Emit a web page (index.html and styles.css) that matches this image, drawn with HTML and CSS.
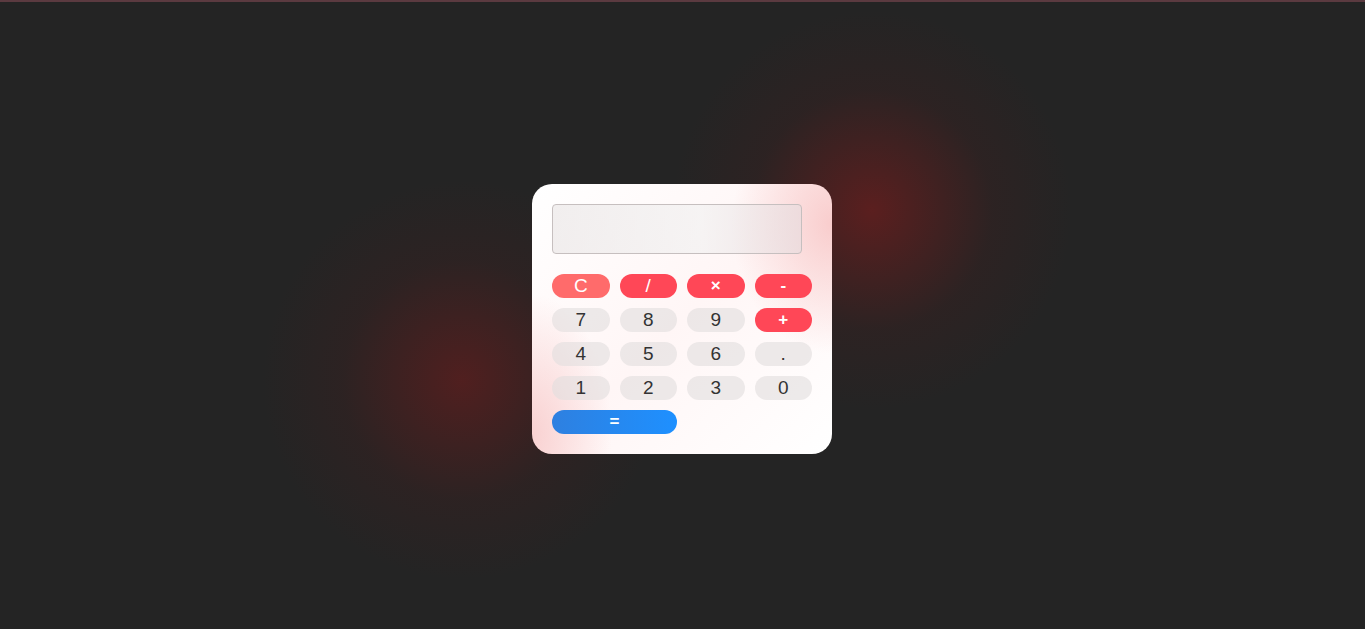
FILE: index.html
```html
<!DOCTYPE html>
<html>
<head>
<meta charset="utf-8">
<link rel="stylesheet" href="styles.css">
</head>
<body>
<div class="topline"></div>
<main class="stage">
  <div class="calc">
    <input class="display" type="text" readonly>
    <div class="keys">
      <button class="key clear">C</button>
      <button class="key op slash">/</button>
      <button class="key op">×</button>
      <button class="key op">-</button>
      <button class="key">7</button>
      <button class="key">8</button>
      <button class="key">9</button>
      <button class="key op">+</button>
      <button class="key">4</button>
      <button class="key">5</button>
      <button class="key">6</button>
      <button class="key">.</button>
      <button class="key">1</button>
      <button class="key">2</button>
      <button class="key">3</button>
      <button class="key">0</button>
      <button class="key equals">=</button>
    </div>
  </div>
</main>
</body>
</html>
```
FILE: styles.css
```css
html, body {
  margin: 0;
  padding: 0;
  height: 100%;
}
body {
  background-color: #242424;
  background-image:
    radial-gradient(circle 200px at 462px 380px, rgba(110, 28, 28, 0.6), rgba(70, 30, 30, 0.25) 60%, rgba(36, 36, 36, 0) 100%),
    radial-gradient(circle 200px at 872px 210px, rgba(120, 28, 28, 0.65), rgba(70, 30, 30, 0.25) 60%, rgba(36, 36, 36, 0) 100%);
  font-family: "Liberation Sans", Arial, sans-serif;
  overflow: hidden;
}
.topline {
  height: 2px;
  background: #5b3a40;
}
.stage {
  height: 627px;
  display: flex;
  justify-content: center;
  padding-top: 182px;
  box-sizing: border-box;
}
.calc {
  width: 300px;
  height: 270px;
  box-sizing: border-box;
  padding: 20px;
  margin-right: 1px;
  border-radius: 20px;
  background:
    radial-gradient(ellipse 100px 130px at 300px 40px, rgba(248, 200, 200, 0.9), rgba(255, 255, 255, 0) 100%),
    radial-gradient(ellipse 80px 140px at 0px 250px, rgba(248, 205, 205, 0.9), rgba(255, 255, 255, 0) 100%),
    linear-gradient(135deg, #ffffff 0%, #fff6f6 50%, #ffffff 100%);
}
.display {
  display: block;
  width: 250px;
  height: 50px;
  box-sizing: border-box;
  border: 1px solid #c6bfbf;
  border-radius: 4px;
  background: linear-gradient(90deg, rgba(232, 228, 228, 0.6), rgba(240, 240, 240, 0.6) 60%, rgba(232, 220, 222, 0.7));
  margin: 0 0 20px 0;
  padding: 0;
  outline: none;
}
.keys {
  display: grid;
  grid-template-columns: repeat(4, 1fr);
  grid-auto-rows: 24px;
  column-gap: 10px;
  row-gap: 10px;
  width: 260px;
}
.key {
  border: none;
  border-radius: 12px;
  background: rgba(225, 222, 222, 0.6);
  color: #333333;
  font-family: "Liberation Sans", Arial, sans-serif;
  font-size: 19px;
  padding: 0;
  line-height: 24px;
}
.key.op {
  background: #ff4757;
  color: #ffffff;
  font-weight: bold;
  font-size: 17px;
}
.key.op.slash {
  font-weight: normal;
  font-size: 19px;
}
.key.clear {
  background: #ff6b6b;
  color: #ffffff;
}
.key.equals {
  grid-column: span 2;
  background: linear-gradient(90deg, #2e80e0, #1e90ff);
  color: #ffffff;
  font-weight: bold;
  font-size: 17px;
}
```
